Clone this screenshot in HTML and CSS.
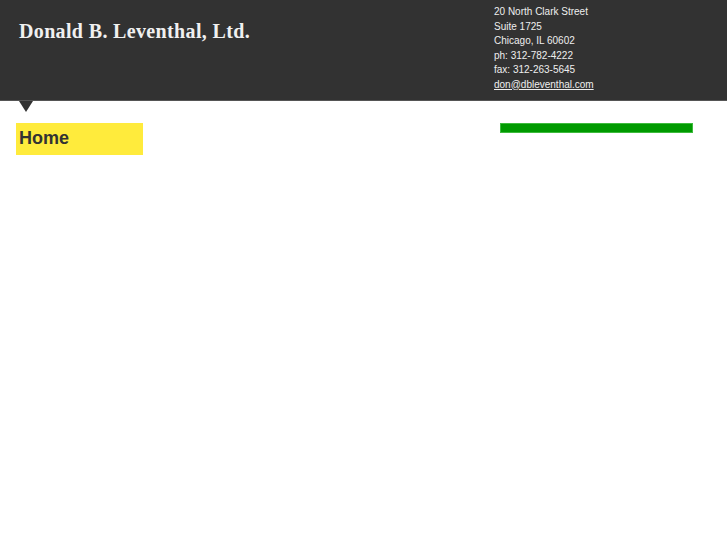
FILE: index.html
```html
<!DOCTYPE html>
<html>
<head>
<meta charset="utf-8">
<link rel="stylesheet" href="styles.css">
</head>
<body>
<header class="header">
  <div class="brand">Donald B. Leventhal, Ltd.</div>
  <address class="contact">
    <div>20 North Clark Street</div>
    <div>Suite 1725</div>
    <div>Chicago, IL 60602</div>
    <div>ph: 312-782-4222</div>
    <div>fax: 312-263-5645</div>
    <div><a href="#">don@dbleventhal.com</a></div>
  </address>
  <span class="pointer"></span>
</header>
<main class="main">
  <nav class="nav"><a class="nav-item" href="#">Home</a></nav>
  <div class="side"><div class="greenbar"></div></div>
</main>
</body>
</html>
```
FILE: styles.css
```css
html, body { margin: 0; padding: 0; background: #fff; }
body { font-family: "Liberation Sans", Arial, sans-serif; }
.header {
  position: relative;
  height: 100px;
  background: #323232;
  border-bottom: 1px solid #555;
  display: flex;
  justify-content: space-between;
}
.brand {
  font-family: "Liberation Serif", "DejaVu Serif", serif;
  font-weight: bold;
  font-size: 20px;
  letter-spacing: 0.35px;
  color: #f0f0f0;
  padding: 20px 0 0 19px;
}
.contact {
  font-style: normal;
  font-size: 10px;
  line-height: 14.5px;
  color: #eee;
  width: 233px;
  padding-top: 5px;
}
.contact a { color: #eee; text-decoration: underline; }
.pointer {
  position: absolute;
  left: 19px;
  top: 101px;
  width: 0; height: 0;
  border-left: 7px solid transparent;
  border-right: 7px solid transparent;
  border-top: 11px solid #323232;
}
.main {
  display: flex;
  justify-content: space-between;
  padding-top: 22px;
}
.nav { padding-left: 16px; }
.nav-item {
  display: block;
  width: 124px;
  height: 32px;
  line-height: 31px;
  padding-left: 3px;
  background: #ffeb3c;
  color: #333;
  font-weight: bold;
  font-size: 18px;
  text-decoration: none;
}
.side { width: 227px; }
.greenbar {
  width: 191px;
  height: 8px;
  background: #009a00;
  border: 1px solid #3dbb3d;
}
```
